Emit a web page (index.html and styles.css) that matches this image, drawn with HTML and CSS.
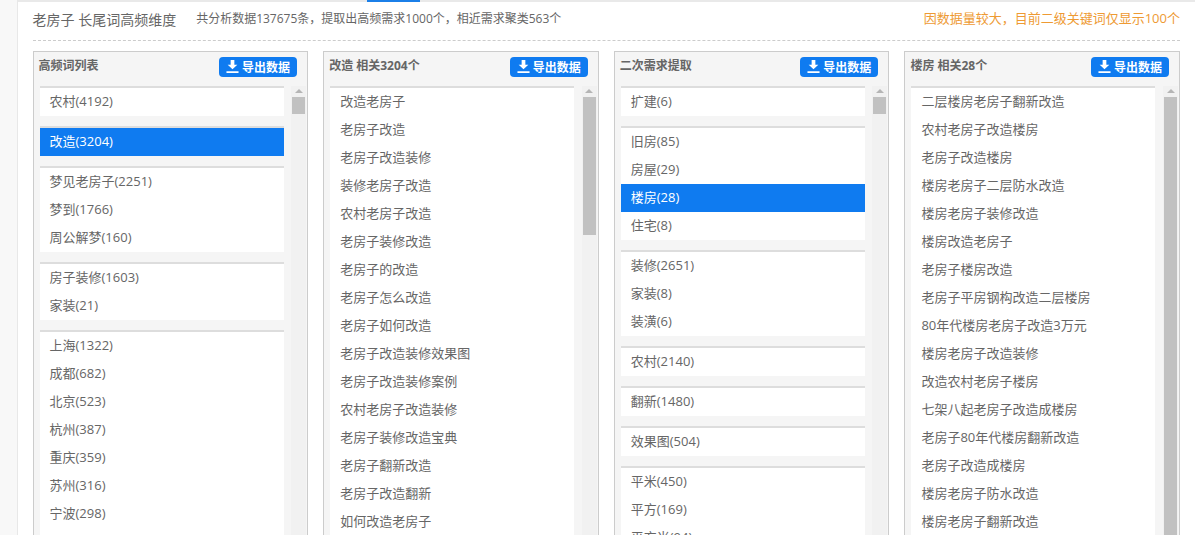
FILE: index.html
```html
<!DOCTYPE html>
<html lang="zh-CN">
<head>
<meta charset="utf-8">
<title>老房子 长尾词高频维度</title>
<link rel="stylesheet" href="styles.css">
</head>
<body>
<div class="page">
  <aside class="rail"></aside>
  <main class="main">
    <div class="tab-mark"></div>
    <header class="summary">
      <h1 class="summary-title">老房子 长尾词高频维度</h1>
      <p class="summary-text">共分析数据137675条，提取出高频需求1000个，相近需求聚类563个</p>
      <p class="summary-note">因数据量较大，目前二级关键词仅显示100个</p>
    </header>
    <div class="columns">

      <section class="panel">
        <div class="panel-head">
          <h2 class="panel-title">高频词列表</h2>
          <button class="export"><svg class="export-icon" viewBox="0 0 14 14"><path d="M5 0h4v5h3.2L7 10 1.8 5H5zM0.500 12h13v2H.5z"/></svg>导出数据</button>
        </div>
        <div class="panel-body">
          <div class="list">
            <ul class="group"><li>农村(4192)</li></ul>
            <ul class="group"><li class="on">改造(3204)</li></ul>
            <ul class="group"><li>梦见老房子(2251)</li><li>梦到(1766)</li><li>周公解梦(160)</li></ul>
            <ul class="group"><li>房子装修(1603)</li><li>家装(21)</li></ul>
            <ul class="group"><li>上海(1322)</li><li>成都(682)</li><li>北京(523)</li><li>杭州(387)</li><li>重庆(359)</li><li>苏州(316)</li><li>宁波(298)</li><li>&nbsp;</li></ul>
          </div>
          <div class="scroll"><span class="arrow"></span><span class="thumb thumb-s"></span></div>
        </div>
      </section>

      <section class="panel">
        <div class="panel-head">
          <h2 class="panel-title">改造 相关3204个</h2>
          <button class="export"><svg class="export-icon" viewBox="0 0 14 14"><path d="M5 0h4v5h3.2L7 10 1.8 5H5zM0.500 12h13v2H.5z"/></svg>导出数据</button>
        </div>
        <div class="panel-body">
          <div class="list">
            <ul class="group"><li>改造老房子</li><li>老房子改造</li><li>老房子改造装修</li><li>装修老房子改造</li><li>农村老房子改造</li><li>老房子装修改造</li><li>老房子的改造</li><li>老房子怎么改造</li><li>老房子如何改造</li><li>老房子改造装修效果图</li><li>老房子改造装修案例</li><li>农村老房子改造装修</li><li>老房子装修改造宝典</li><li>老房子翻新改造</li><li>老房子改造翻新</li><li>如何改造老房子</li><li>&nbsp;</li></ul>
          </div>
          <div class="scroll"><span class="arrow"></span><span class="thumb thumb-m"></span></div>
        </div>
      </section>

      <section class="panel">
        <div class="panel-head">
          <h2 class="panel-title">二次需求提取</h2>
          <button class="export"><svg class="export-icon" viewBox="0 0 14 14"><path d="M5 0h4v5h3.2L7 10 1.8 5H5zM0.500 12h13v2H.5z"/></svg>导出数据</button>
        </div>
        <div class="panel-body">
          <div class="list">
            <ul class="group"><li>扩建(6)</li></ul>
            <ul class="group"><li>旧房(85)</li><li>房屋(29)</li><li class="on">楼房(28)</li><li>住宅(8)</li></ul>
            <ul class="group"><li>装修(2651)</li><li>家装(8)</li><li>装潢(6)</li></ul>
            <ul class="group"><li>农村(2140)</li></ul>
            <ul class="group"><li>翻新(1480)</li></ul>
            <ul class="group"><li>效果图(504)</li></ul>
            <ul class="group"><li>平米(450)</li><li>平方(169)</li><li>平方米(94)</li></ul>
          </div>
          <div class="scroll"><span class="arrow"></span><span class="thumb thumb-s"></span></div>
        </div>
      </section>

      <section class="panel">
        <div class="panel-head">
          <h2 class="panel-title">楼房 相关28个</h2>
          <button class="export"><svg class="export-icon" viewBox="0 0 14 14"><path d="M5 0h4v5h3.2L7 10 1.8 5H5zM0.500 12h13v2H.5z"/></svg>导出数据</button>
        </div>
        <div class="panel-body">
          <div class="list">
            <ul class="group"><li>二层楼房老房子翻新改造</li><li>农村老房子改造楼房</li><li>老房子改造楼房</li><li>楼房老房子二层防水改造</li><li>楼房老房子装修改造</li><li>楼房改造老房子</li><li>老房子楼房改造</li><li>老房子平房钢构改造二层楼房</li><li>80年代楼房老房子改造3万元</li><li>楼房老房子改造装修</li><li>改造农村老房子楼房</li><li>七架八起老房子改造成楼房</li><li>老房子80年代楼房翻新改造</li><li>老房子改造成楼房</li><li>楼房老房子防水改造</li><li>楼房老房子翻新改造</li><li>&nbsp;</li></ul>
          </div>
          <div class="scroll"><span class="arrow"></span><span class="thumb thumb-l"></span></div>
        </div>
      </section>

    </div>
  </main>
</div>
</body>
</html>
```
FILE: styles.css
```css
* { box-sizing: border-box; }
html, body { margin: 0; padding: 0; height: 535px; overflow: hidden; background: #fff; }
body { font-family: "Open Sans", "Noto Sans CJK SC", sans-serif; color: #666; }
ul { list-style: none; margin: 0; padding: 0; }
h1, h2, p { margin: 0; font-weight: normal; }

.page { display: flex; height: 535px; overflow: hidden; }
.rail { width: 17.5px; flex: none; background: #f8f8f8; border-right: 1px solid #e8e8e8; }
.main { flex: 1; min-width: 0; padding: 0 15px; border-top: 2px solid #e9e9e9; position: relative; }
.tab-mark { position: absolute; left: 349.5px; top: -2px; width: 53px; height: 2px; background: #1b7fe8; }

.summary { display: flex; align-items: flex-start; height: 39px; border-bottom: 1px dashed #ccc; margin-bottom: 10px; }
.summary-title { font-size: 14px; line-height: 20px; margin-top: 8px; color: #666; margin-right: 20px; }
.summary-text { font-size: 12px; line-height: 20px; margin-top: 7px; color: #666; }
.summary-note { font-size: 13px; line-height: 20px; margin-top: 6px; color: #ee9a33; margin-left: auto; }

.columns { display: grid; grid-template-columns: repeat(4, 1fr); gap: 15px; }
.panel { background: #f5f5f5; border: 1px solid #ccc; height: 600px; padding: 5px 1px 0 6px; }
.panel-head { display: flex; justify-content: space-between; align-items: flex-start; height: 29px; padding-right: 9px; }
.panel-title { font-size: 12px; font-weight: bold; color: #666; margin-left: -1px; line-height: 17px; }
.export { display: flex; align-items: center; justify-content: center; gap: 3px; width: 78px; height: 20px; padding: 0; border: 0; border-radius: 4px; background: #0f7bf0; color: #fff; font: bold 12px "Open Sans", "Noto Sans CJK SC", sans-serif; }
.export-icon { width: 13px; height: 13px; fill: #fff; margin-top: -2px; }

.panel-body { display: flex; justify-content: space-between; }
.list { width: 244px; flex: none; display: flex; flex-direction: column; gap: 10px; }
.group { background: #fff; border-top: 2px solid #ddd; }
.group li { height: 28px; line-height: 26px; font-size: 13px; padding-left: 10px; color: #666; }
.group li.on { background: #0f7bf0; color: #fff; }

.scroll { width: 15px; flex: none; background: #f1f1f1; height: 520px; display: flex; flex-direction: column; align-items: center; }
.arrow { width: 0; height: 0; margin-top: 3px; border: 4px solid transparent; border-top: 0; border-bottom: 4px solid #b5b5b5; }
.thumb { width: 13px; margin-top: 4px; background: #c1c1c1; }
.thumb-s { height: 17px; }
.thumb-m { height: 138px; }
.thumb-l { height: 450px; }
```
